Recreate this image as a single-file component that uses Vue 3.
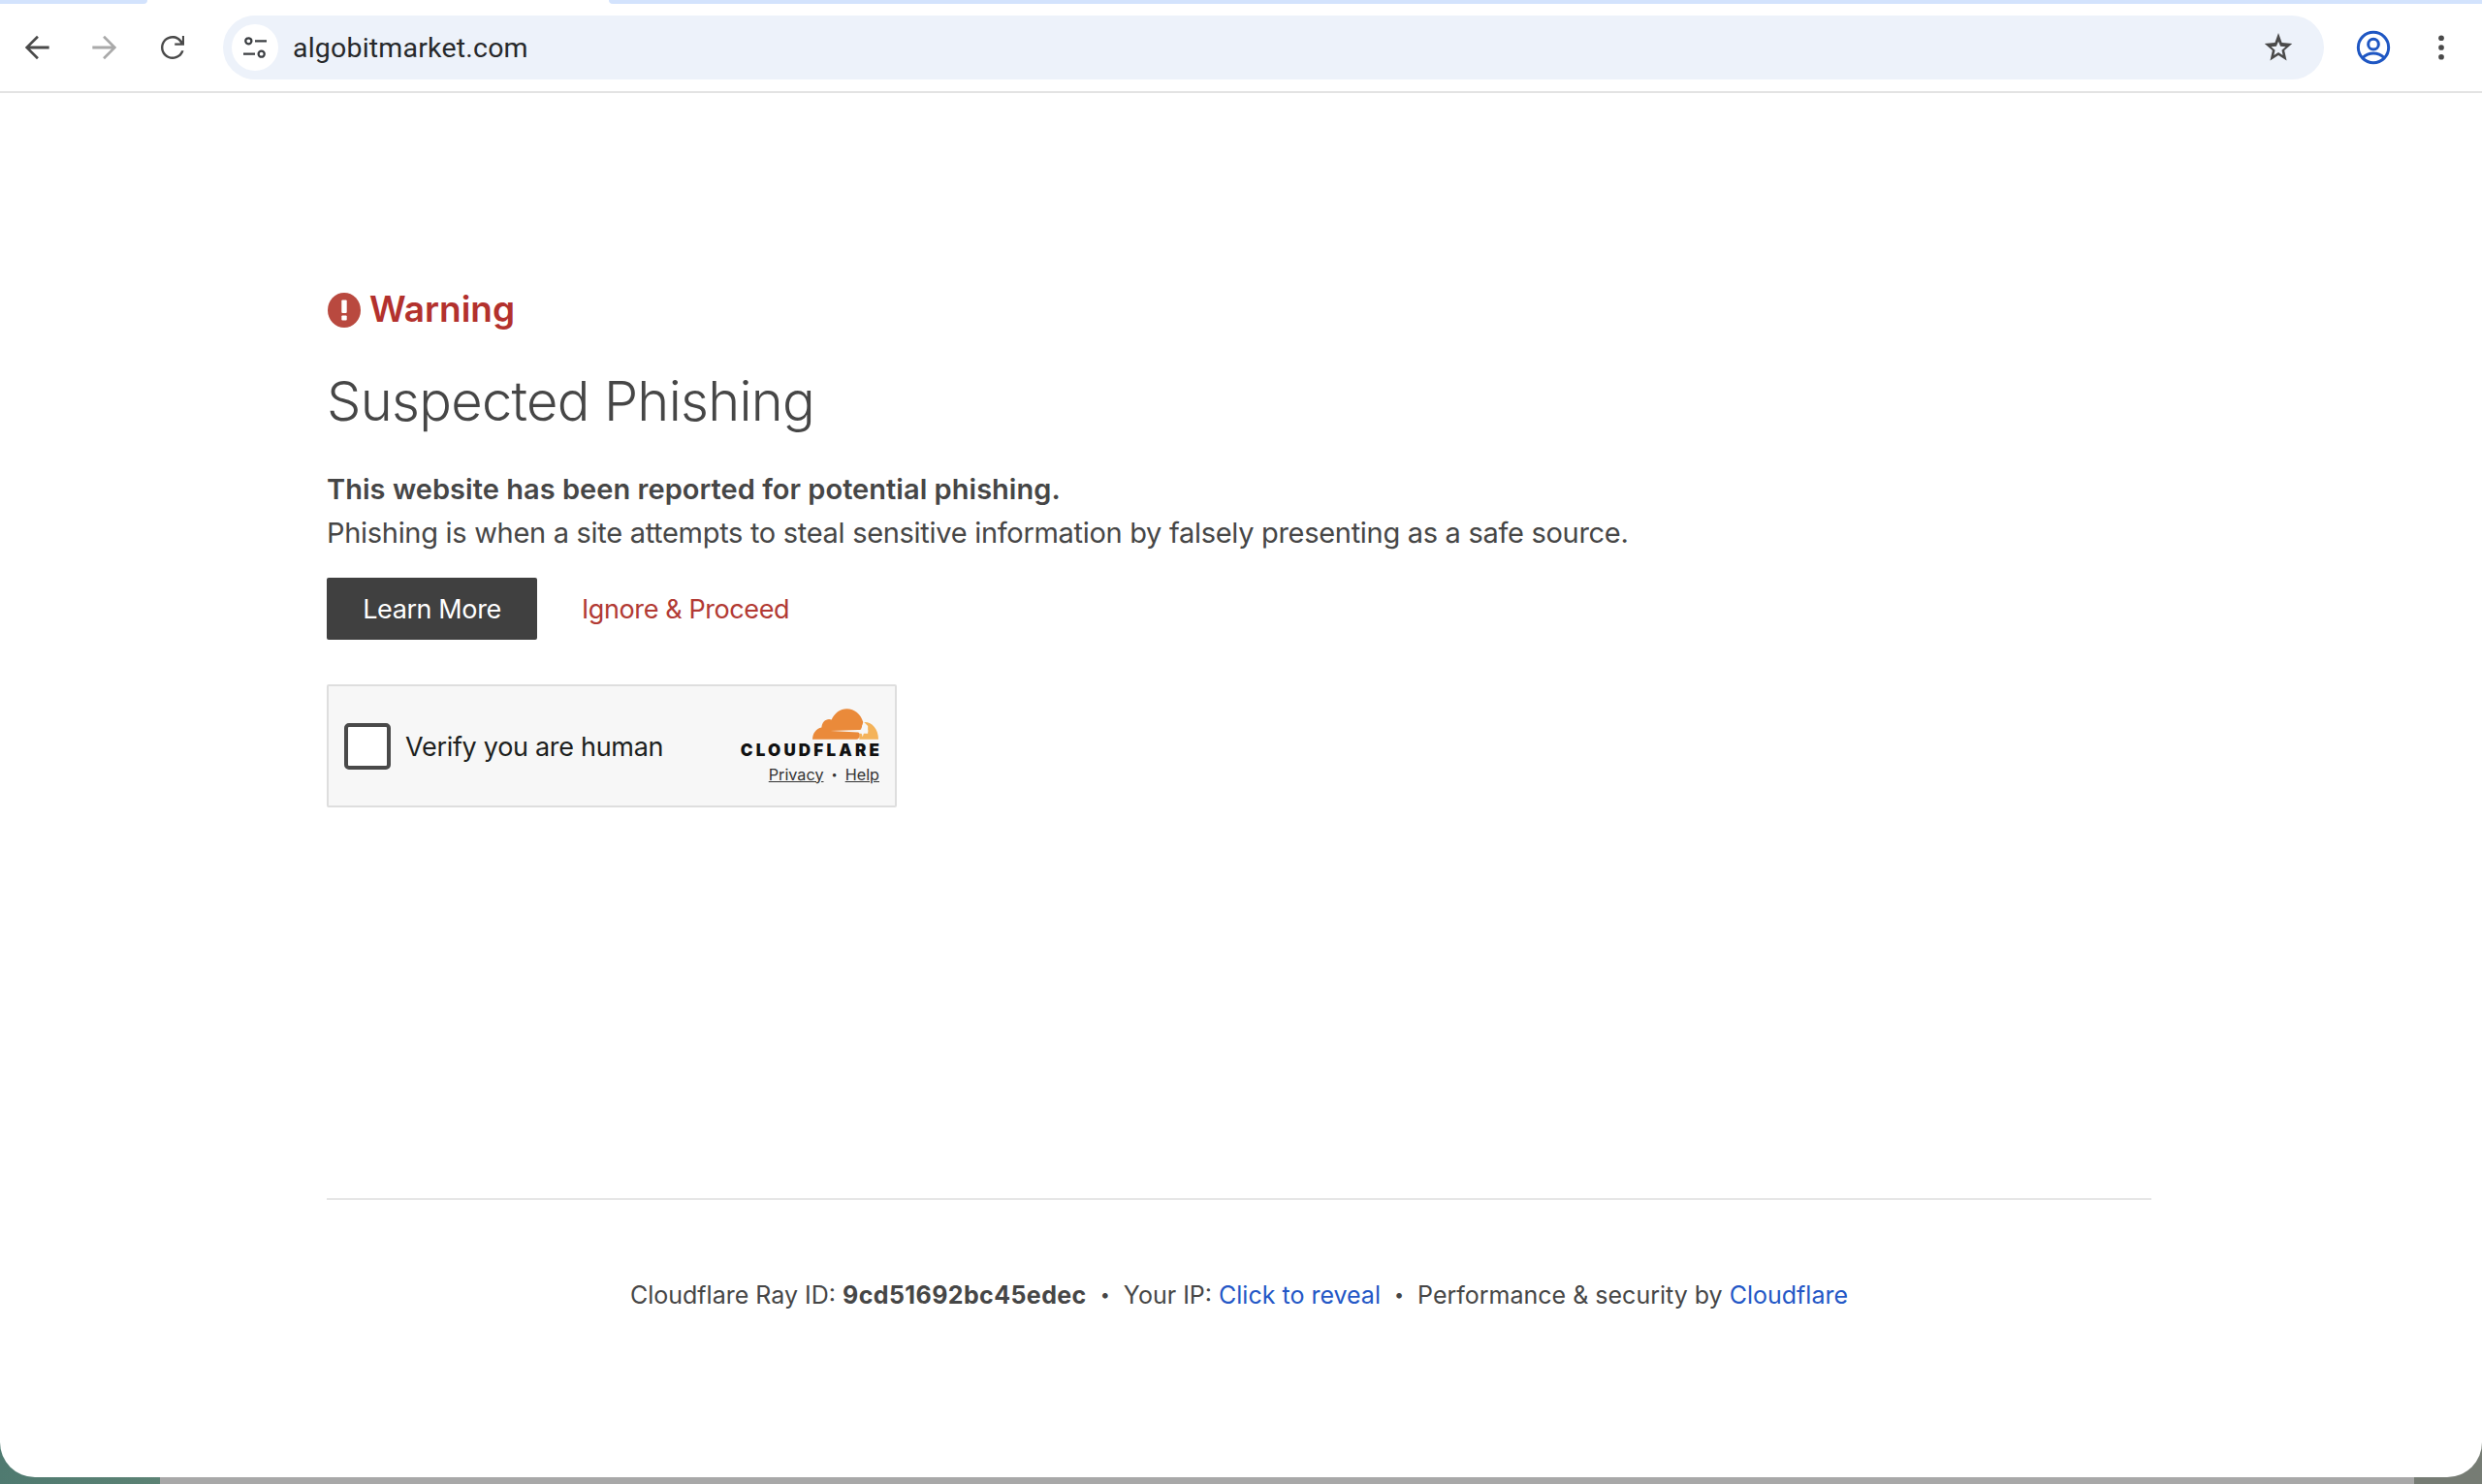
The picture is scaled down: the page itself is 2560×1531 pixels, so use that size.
<script setup>
const rayId = '9cd51692bc45edec'
</script>

<template>
  <div class="desktop">
    <div class="window">
      <div class="tabstrip">
        <span class="tab-edge left"></span>
        <span class="tab-active"></span>
        <span class="tab-edge right"></span>
      </div>

      <header class="toolbar">
        <button class="tool back">
          <svg viewBox="0 0 24 24"><path d="M20 11.100H7.600l5.600-5.600L12 4.300 4.300 12l7.700 7.700 1.200-1.200-5.600-5.600H20z" /></svg>
        </button>
        <button class="tool forward">
          <svg viewBox="0 0 24 24"><path d="M4 11.100h12.400l-5.600-5.600L12 4.300l7.700 7.700-7.700 7.700-1.200-1.200 5.600-5.600H4z" /></svg>
        </button>
        <button class="tool reload">
          <svg viewBox="0 0 24 24"><path d="M12 20c-2.200 0-4.100-.8-5.700-2.300C4.800 16.100 4 14.200 4 12s.8-4.100 2.300-5.700C7.900 4.800 9.800 4 12 4c1.400 0 2.700.3 3.800 1 1.100.6 2.100 1.500 2.800 2.500V4H20v6.500h-6.500V9h3.900c-.5-1-1.300-1.800-2.300-2.500-1-.6-2-.9-3.100-.9-1.800 0-3.200.6-4.500 1.800C6.300 8.700 5.600 10.200 5.600 12s.7 3.300 1.900 4.500c1.300 1.300 2.700 1.900 4.500 1.900 1.400 0 2.600-.4 3.700-1.200 1.100-.8 1.900-1.800 2.300-3.100h1.700c-.5 1.800-1.400 3.200-2.900 4.300C15.400 19.500 13.800 20 12 20z" /></svg>
        </button>

        <div class="omnibox">
          <span class="site-info">
            <svg viewBox="0 0 24 24" fill="none" stroke="#3c3f43" stroke-width="1.700">
              <circle cx="7" cy="7" r="2.300" />
              <circle cx="17" cy="17" r="2.300" />
              <path d="M12 7h9M3 17h9" />
            </svg>
          </span>
          <span class="url">algobitmarket.com</span>
          <svg class="star" viewBox="0 0 24 24"><path d="m8.900 17.300 3.100-1.900 3.100 1.900-.8-3.500 2.700-2.300-3.600-.3L12 7.900l-1.400 3.300-3.600.3 2.700 2.300zM6.300 21l1.600-7L2.500 9.300l7.100-.6L12 2l2.400 6.700 7.100.6-5.400 4.700 1.600 7-5.700-3.700z" /></svg>
        </div>

        <button class="tool profile">
          <svg viewBox="0 0 24 24" stroke="#1f57c3" stroke-width="1.800">
            <circle cx="12" cy="12" r="9.400" />
            <circle cx="12" cy="10" r="3.200" />
            <path d="M5.500 18.200c1.700-1.700 4-2.600 6.500-2.600s4.800.9 6.500 2.600" />
          </svg>
        </button>
        <button class="tool menu">
          <svg viewBox="0 0 24 24"><circle cx="12" cy="5.500" r="1.900" /><circle cx="12" cy="12" r="1.900" /><circle cx="12" cy="18.500" r="1.900" /></svg>
        </button>
      </header>

      <main class="page">
        <section class="warning-block">
          <h2 class="warning">
            <svg viewBox="0 0 34 36">
              <ellipse cx="17" cy="18" rx="17" ry="18" fill="#b9493f" />
              <rect x="14.300" y="7.500" width="5.400" height="13.500" rx="1" fill="#fff" />
              <rect x="14.300" y="23.500" width="5.400" height="5" rx="1" fill="#fff" />
            </svg>
            <span class="warning-text">Warning</span>
          </h2>
          <h1 class="title">Suspected Phishing</h1>
          <p class="lead">This website has been reported for potential phishing.</p>
          <p class="desc">Phishing is when a site attempts to steal sensitive information by falsely presenting as a safe source.</p>

          <div class="actions">
            <a class="learn">Learn More</a>
            <a class="ignore">Ignore &amp; Proceed</a>
          </div>

          <div class="turnstile">
            <span class="checkbox"></span>
            <span class="verify">Verify you are human</span>
            <div class="cf-brand">
              <svg class="cf-cloud" viewBox="0 0 70 32">
                <path fill="#f4b35a" d="M54 14C62 13.500 69 21 69 32H49v-6h9v-8z" />
                <path fill="#ea8a3a" d="M0 32C.3 25.500 3.800 20.500 9.500 19.500 10 13.500 15 9.500 20 11.500 23 4.500 29 0 36 0 44 0 50.500 5.500 53 14L51 22H48v2.500C50 25 50 32 46 32z" />
                <path fill="#f7f7f7" d="M19 23.200 48 22l4 1.500-4 1z" />
                <path fill="#f7f7f7" d="M52.500 16.500 54 21.500 59 23 54 24.500 52.500 29.500 51 24.500 46 23 51 21.500z" />
              </svg>
              <span class="cf-word">CLOUDFLARE</span>
              <div class="cf-links">
                <a>Privacy</a>
                <span class="cf-dot">•</span>
                <a>Help</a>
              </div>
            </div>
          </div>
        </section>

        <footer class="footer">
          <span>Cloudflare Ray ID: <strong>{{ rayId }}</strong></span>
          <span class="sep">•</span>
          <span>Your IP: <a>Click to reveal</a></span>
          <span class="sep">•</span>
          <span>Performance &amp; security by <a>Cloudflare</a></span>
        </footer>
      </main>
    </div>
  </div>
</template>

<style>
html,
body {
  margin: 0;
  padding: 0;
  background: #fff;
}
</style>

<style scoped>
.desktop {
  width: 2560px;
  height: 1531px;
  overflow: hidden;
  background: linear-gradient(90deg, #4f7a70 0, #5c8274 165px, #a8a8a8 165px, #a8a8a8 2490px, #767c74 2490px, #767c74 100%);
}

.window {
  height: 1524px;
  display: flex;
  flex-direction: column;
  background: #fff;
  border-radius: 0 0 36px 36px;
  overflow: hidden;
}

.tabstrip {
  display: flex;
  height: 4px;
  flex: none;
}

.tab-edge {
  background: #d3e3fd;
}

.tab-edge.left {
  width: 152px;
  border-radius: 0 0 6px 0;
}

.tab-active {
  width: 476px;
}

.tab-edge.right {
  flex: 1;
  border-radius: 0 0 0 6px;
}

.toolbar {
  display: flex;
  align-items: center;
  height: 90px;
  flex: none;
  border-bottom: 2px solid #e3e3e3;
  padding-left: 14px;
  box-sizing: content-box;
}

.tool {
  width: 48px;
  height: 48px;
  padding: 0;
  border: 0;
  background: none;
  display: flex;
  align-items: center;
  justify-content: center;
}

.tool svg {
  width: 38px;
  height: 38px;
  fill: #4a4a4a;
}

.forward {
  margin-left: 22px;
}

.forward svg {
  fill: #a9a9a9;
}

.reload {
  margin-left: 22px;
}

.reload svg {
  width: 36px;
  height: 36px;
}

.omnibox {
  margin-left: 28px;
  width: 2167px;
  height: 66px;
  flex: none;
  display: flex;
  align-items: center;
  background: #edf2fa;
  border-radius: 33px;
}

.site-info {
  width: 48px;
  height: 48px;
  margin-left: 9px;
  border-radius: 50%;
  background: #fff;
  display: flex;
  align-items: center;
  justify-content: center;
}

.site-info svg {
  width: 32px;
  height: 32px;
}

.url {
  margin-left: 15px;
  font: 400 28.5px "Roboto", sans-serif;
  color: #27292b;
  letter-spacing: 0.2px;
}

.star {
  width: 36px;
  height: 36px;
  margin-left: auto;
  margin-right: 29px;
  fill: #4a4a4a;
}

.profile {
  margin-left: 27px;
}

.profile svg {
  width: 40px;
  height: 40px;
  fill: none;
}

.menu {
  margin-left: 22px;
}

.menu svg {
  width: 36px;
  height: 36px;
}

.page {
  flex: 1;
  padding: 206px 341px 0 337px;
  font-family: "Inter", "Liberation Sans", sans-serif;
  color: #464646;
}

.warning-block {
  height: 936px;
  border-bottom: 2px solid #e6e6e6;
  box-sizing: border-box;
}

.warning {
  display: flex;
  align-items: center;
  gap: 9px;
  margin: 0;
  height: 36px;
  font-size: 37px;
  font-weight: 600;
  color: #b3312d;
}

.warning-text {
  padding-bottom: 4px;
}

.warning svg {
  width: 34px;
  height: 36px;
  margin-left: 1px;
}

.title {
  margin: 41px 0 0;
  font-size: 56px;
  line-height: 70px;
  font-weight: 300;
  letter-spacing: -0.7px;
}

.lead {
  margin: 33px 0 0;
  font-size: 29px;
  line-height: 45px;
  font-weight: 600;
  letter-spacing: 0.03px;
}

.desc {
  margin: 0;
  font-size: 29px;
  line-height: 45px;
  letter-spacing: -0.3px;
}

.actions {
  display: flex;
  align-items: center;
  margin-top: 24px;
}

.learn {
  width: 217px;
  height: 64px;
  display: flex;
  align-items: center;
  justify-content: center;
  background: #404040;
  border-radius: 2px;
  color: #fff;
  font-size: 27px;
  letter-spacing: -0.4px;
}

.ignore {
  margin-left: 46px;
  color: #b23a34;
  font-size: 27px;
  letter-spacing: -0.4px;
}

.turnstile {
  position: relative;
  margin-top: 46px;
  width: 588px;
  height: 127px;
  box-sizing: border-box;
  display: flex;
  align-items: center;
  padding: 0 16px;
  background: #f7f7f7;
  border: 2px solid #dedede;
  border-radius: 2px;
}

.checkbox {
  width: 48px;
  height: 48px;
  box-sizing: border-box;
  background: #fff;
  border: 4px solid #4a4a4a;
  border-radius: 5px;
}

.verify {
  margin-left: 15px;
  padding-top: 2px;
  font-size: 27px;
  letter-spacing: -0.3px;
  color: #1d1f20;
}

.cf-brand {
  margin-left: auto;
  display: flex;
  flex-direction: column;
  align-items: flex-end;
}

.cf-cloud {
  width: 69px;
  height: 32px;
}

.cf-word {
  margin-top: 3px;
  font-size: 17px;
  line-height: 16px;
  font-weight: 900;
  letter-spacing: 3.200px;
  margin-right: -3.200px;
  color: #111;
}

.cf-links {
  display: flex;
  align-items: center;
  gap: 8px;
  margin-top: 7px;
  font-size: 16.2px;
  line-height: 20px;
  color: #333;
}

.cf-links a {
  text-decoration: underline;
}

.cf-dot {
  font-size: 11px;
}

.footer {
  display: flex;
  justify-content: center;
  gap: 14px;
  margin-top: 82px;
  font-size: 25px;
  line-height: 32px;
  color: #464646;
}

.footer strong {
  font-weight: 700;
  letter-spacing: 0.4px;
}

.footer .sep {
  font-size: 18px;
}

.footer a {
  color: #2357c6;
}
</style>
